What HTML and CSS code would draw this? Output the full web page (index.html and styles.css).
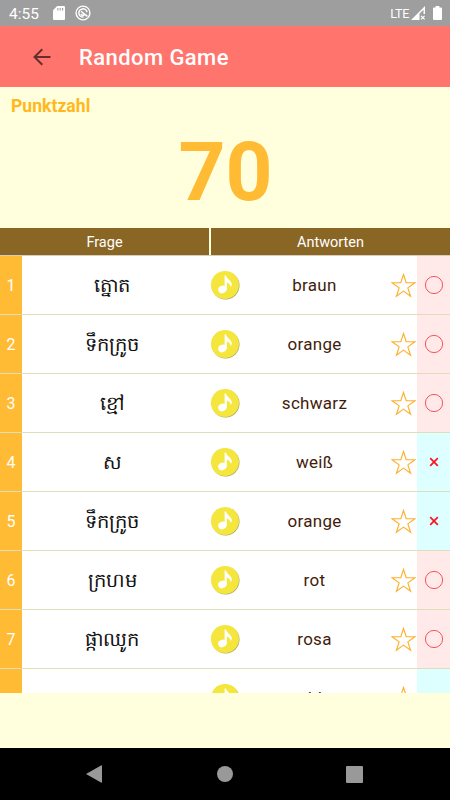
FILE: index.html
```html
<!DOCTYPE html>
<html lang="de">
<head>
  <meta charset="utf-8">
  <title>Random Game</title>
  <link rel="stylesheet" href="styles.css">
</head>
<body>

<svg class="defs" width="0" height="0">
  <symbol id="note" viewBox="0 0 30 30">
    <circle cx="15.600" cy="15.600" r="13.900" fill="#a8a468"/>
    <circle cx="15" cy="15" r="14" fill="#f4e63c"/>
    <ellipse cx="12.400" cy="19.400" rx="4.300" ry="3.700" transform="rotate(-25 12.4 19.4)" fill="#fff"/>
    <path d="M14.600 5.500h1.400c.4 3.400 6.200 5.400 5.900 9.600l-1.300 2c-.2-2.600-1.800-4-3.800-4.600V19.600h-2.200z" fill="#fff"/>
  </symbol>
  <symbol id="star" viewBox="0 0 24 24">
    <path d="M12 1.400l2.600 8h8.300l-6.700 4.900 2.600 8-6.800-4.900-6.800 4.900 2.600-8L1.100 9.400h8.300z" fill="none" stroke="#fdb02e" stroke-width="1.100"/>
  </symbol>
  <symbol id="right" viewBox="0 0 20 20">
    <circle cx="10" cy="10" r="8.600" fill="none" stroke="#f8545c" stroke-width="1"/>
  </symbol>
  <symbol id="wrong" viewBox="0 0 20 20">
    <path d="M6.200 6.200l7.600 7.600M13.800 6.200l-7.600 7.600" fill="none" stroke="#fa1420" stroke-width="1.700"/>
  </symbol>
</svg>

<div class="statusbar">
  <span class="clock">4:55</span>
  <svg class="sd" width="12" height="14" viewBox="0 0 12 14">
    <path d="M4.200 0H11q1 0 1 1v12q0 1-1 1H1q-1 0-1-1V4.200z" fill="#fff"/>
    <path d="M4.800 2v2.600M7.200 2v2.600M9.600 2v2.600" stroke="#9e9e9e" stroke-width="1.100"/>
  </svg>
  <svg class="sync" width="16" height="16" viewBox="0 0 16 16" fill="none" stroke="#fff">
    <circle cx="8" cy="8" r="6.900" stroke-width="1.400"/>
    <path d="M8.500 12A4.100 4.100 0 1 1 12 7.200" stroke-width="1.500"/>
    <path d="M6 6.400l6.400 5M5.600 9.400q2 1.600 3.800.4" stroke-width="1.500"/>
  </svg>
  <span class="lte">LTE</span>
  <svg class="signal" width="15" height="14" viewBox="0 0 15 14">
    <path d="M0 14L14 0v8h-1.500V3.700L8.500 7.600V14z" fill="#fff"/>
    <path d="M10 9.800l3.600 3.600M13.600 9.800L10 13.400" stroke="#fff" stroke-width="1.200"/>
  </svg>
  <svg class="battery" width="9" height="14" viewBox="0 0 9 14">
    <path d="M2.600 0h3.800v1.400H8q1 0 1 1V13q0 1-1 1H1q-1 0-1-1V2.400q0-1 1-1h1.600z" fill="#fff"/>
  </svg>
</div>

<div class="toolbar">
  <svg class="back" width="18" height="18" viewBox="0 0 18 18">
    <path d="M17.500 9H1.800M9.300 1.200L1.500 9l7.800 7.800" fill="none" stroke="#652e2c" stroke-width="2"/>
  </svg>
  <h1>Random Game</h1>
</div>

<div class="score">
  <h2>Punktzahl</h2>
  <div class="points">70</div>
</div>

<div class="table-head">
  <div>Frage</div>
  <div>Antworten</div>
</div>

<div class="list">
  <div class="row">
    <div class="num">1</div><div class="question">ត្នោត</div>
    <svg class="note"><use href="#note"/></svg><div class="answer">braun</div>
    <svg class="star"><use href="#star"/></svg><div class="mark ok"><svg><use href="#right"/></svg></div>
  </div>
  <div class="row">
    <div class="num">2</div><div class="question">ទឹកក្រូច</div>
    <svg class="note"><use href="#note"/></svg><div class="answer">orange</div>
    <svg class="star"><use href="#star"/></svg><div class="mark ok"><svg><use href="#right"/></svg></div>
  </div>
  <div class="row">
    <div class="num">3</div><div class="question">ខ្មៅ</div>
    <svg class="note"><use href="#note"/></svg><div class="answer">schwarz</div>
    <svg class="star"><use href="#star"/></svg><div class="mark ok"><svg><use href="#right"/></svg></div>
  </div>
  <div class="row">
    <div class="num">4</div><div class="question">ស</div>
    <svg class="note"><use href="#note"/></svg><div class="answer">weiß</div>
    <svg class="star"><use href="#star"/></svg><div class="mark ng"><svg><use href="#wrong"/></svg></div>
  </div>
  <div class="row">
    <div class="num">5</div><div class="question">ទឹកក្រូច</div>
    <svg class="note"><use href="#note"/></svg><div class="answer">orange</div>
    <svg class="star"><use href="#star"/></svg><div class="mark ng"><svg><use href="#wrong"/></svg></div>
  </div>
  <div class="row">
    <div class="num">6</div><div class="question">ក្រហម</div>
    <svg class="note"><use href="#note"/></svg><div class="answer">rot</div>
    <svg class="star"><use href="#star"/></svg><div class="mark ok"><svg><use href="#right"/></svg></div>
  </div>
  <div class="row">
    <div class="num">7</div><div class="question">ផ្កាឈូក</div>
    <svg class="note"><use href="#note"/></svg><div class="answer">rosa</div>
    <svg class="star"><use href="#star"/></svg><div class="mark ok"><svg><use href="#right"/></svg></div>
  </div>
  <div class="row">
    <div class="num"></div><div class="question"></div>
    <svg class="note"><use href="#note"/></svg><div class="answer">golden</div>
    <svg class="star"><use href="#star"/></svg><div class="mark ng"><svg><use href="#wrong"/></svg></div>
  </div>
</div>

<div class="navbar">
  <svg width="16" height="18" viewBox="0 0 16 18"><path d="M0 9L15 .4q1-.4 1 .6v16q0 1-1 .6z" fill="#999"/></svg>
  <svg width="16" height="16" viewBox="0 0 16 16"><circle cx="8" cy="8" r="8" fill="#999"/></svg>
  <svg width="17" height="17" viewBox="0 0 17 17"><rect width="17" height="17" rx="1" fill="#999"/></svg>
</div>

</body>
</html>
```
FILE: styles.css
```css
body {
  margin: 0;
  height: 800px;
  display: flex;
  flex-direction: column;
  overflow: hidden;
  background: #ffffdd;
  font-family: Roboto, "Noto Sans", sans-serif;
}
.defs {
  position: absolute;
}
.statusbar {
  height: 26px;
  box-sizing: border-box;
  padding: 0 8px 0 9px;
  display: flex;
  align-items: center;
  background: #9e9e9e;
  color: #fff;
}
.clock {
  width: 44px;
  font-size: 15.500px;
  padding-top: 2px;
}
.sync {
  margin-left: 10px;
}
.lte {
  margin-left: auto;
  font-size: 12.500px;
  letter-spacing: -0.300px;
}
.signal {
  margin: 0 7px 0 2px;
}
.toolbar {
  height: 61px;
  padding-left: 33px;
  display: flex;
  align-items: center;
  background: #ff746c;
  color: #fff;
}
.toolbar h1 {
  margin: 2px 0 0 28px;
  font-size: 22px;
  font-weight: 500;
  letter-spacing: 0.420px;
}
.score {
  height: 141px;
  color: #ffbb33;
}
.score h2 {
  margin: 0;
  padding: 9px 11px 0;
  font-size: 17.600px;
  line-height: 20px;
  color: #ffb820;
}
.points {
  padding-left: 1px;
  text-align: center;
  font-size: 82px;
  font-weight: bold;
  line-height: 112px;
}
.table-head {
  height: 27px;
  display: grid;
  grid-template-columns: 209px 1fr;
  gap: 2px;
  line-height: 29px;
  text-align: center;
  font-size: 14.500px;
  color: #fff;
}
.table-head div {
  height: 27px;
  background: #8a6624;
}
.list {
  height: 438px;
  box-sizing: border-box;
  overflow: hidden;
  border-top: 1px solid #d9cdc2;
  background: #fff;
}
.row {
  height: 59.060px;
  box-sizing: border-box;
  display: grid;
  grid-template-columns: 22px 180px 46px 133px 8px 28px 33px;
  align-items: center;
  justify-items: center;
  border-bottom: 1px solid #dedebc;
}
.num, .mark {
  width: 100%;
  height: 100%;
  display: flex;
  align-items: center;
  justify-content: center;
}
.num {
  background: #ffbb33;
  color: #fff;
  font-size: 16px;
}
.question {
  padding-top: 4px;
  font-size: 19.500px;
  color: #111;
}
.answer {
  font-size: 17px;
  letter-spacing: 0.300px;
  color: #431c0a;
}
.note {
  width: 30px;
  height: 30px;
}
.star {
  grid-column: 6;
  width: 25px;
  height: 25px;
}
.mark svg {
  width: 20px;
  height: 20px;
}
.ok {
  background: #ffe9e9;
}
.ng {
  background: #ddffff;
}
.navbar {
  margin-top: auto;
  height: 52px;
  display: flex;
  align-items: center;
  justify-content: space-between;
  padding: 0 87px 0 86px;
  background: #000;
}
.navbar svg:nth-child(2) {
  margin-left: 1px;
}
```
